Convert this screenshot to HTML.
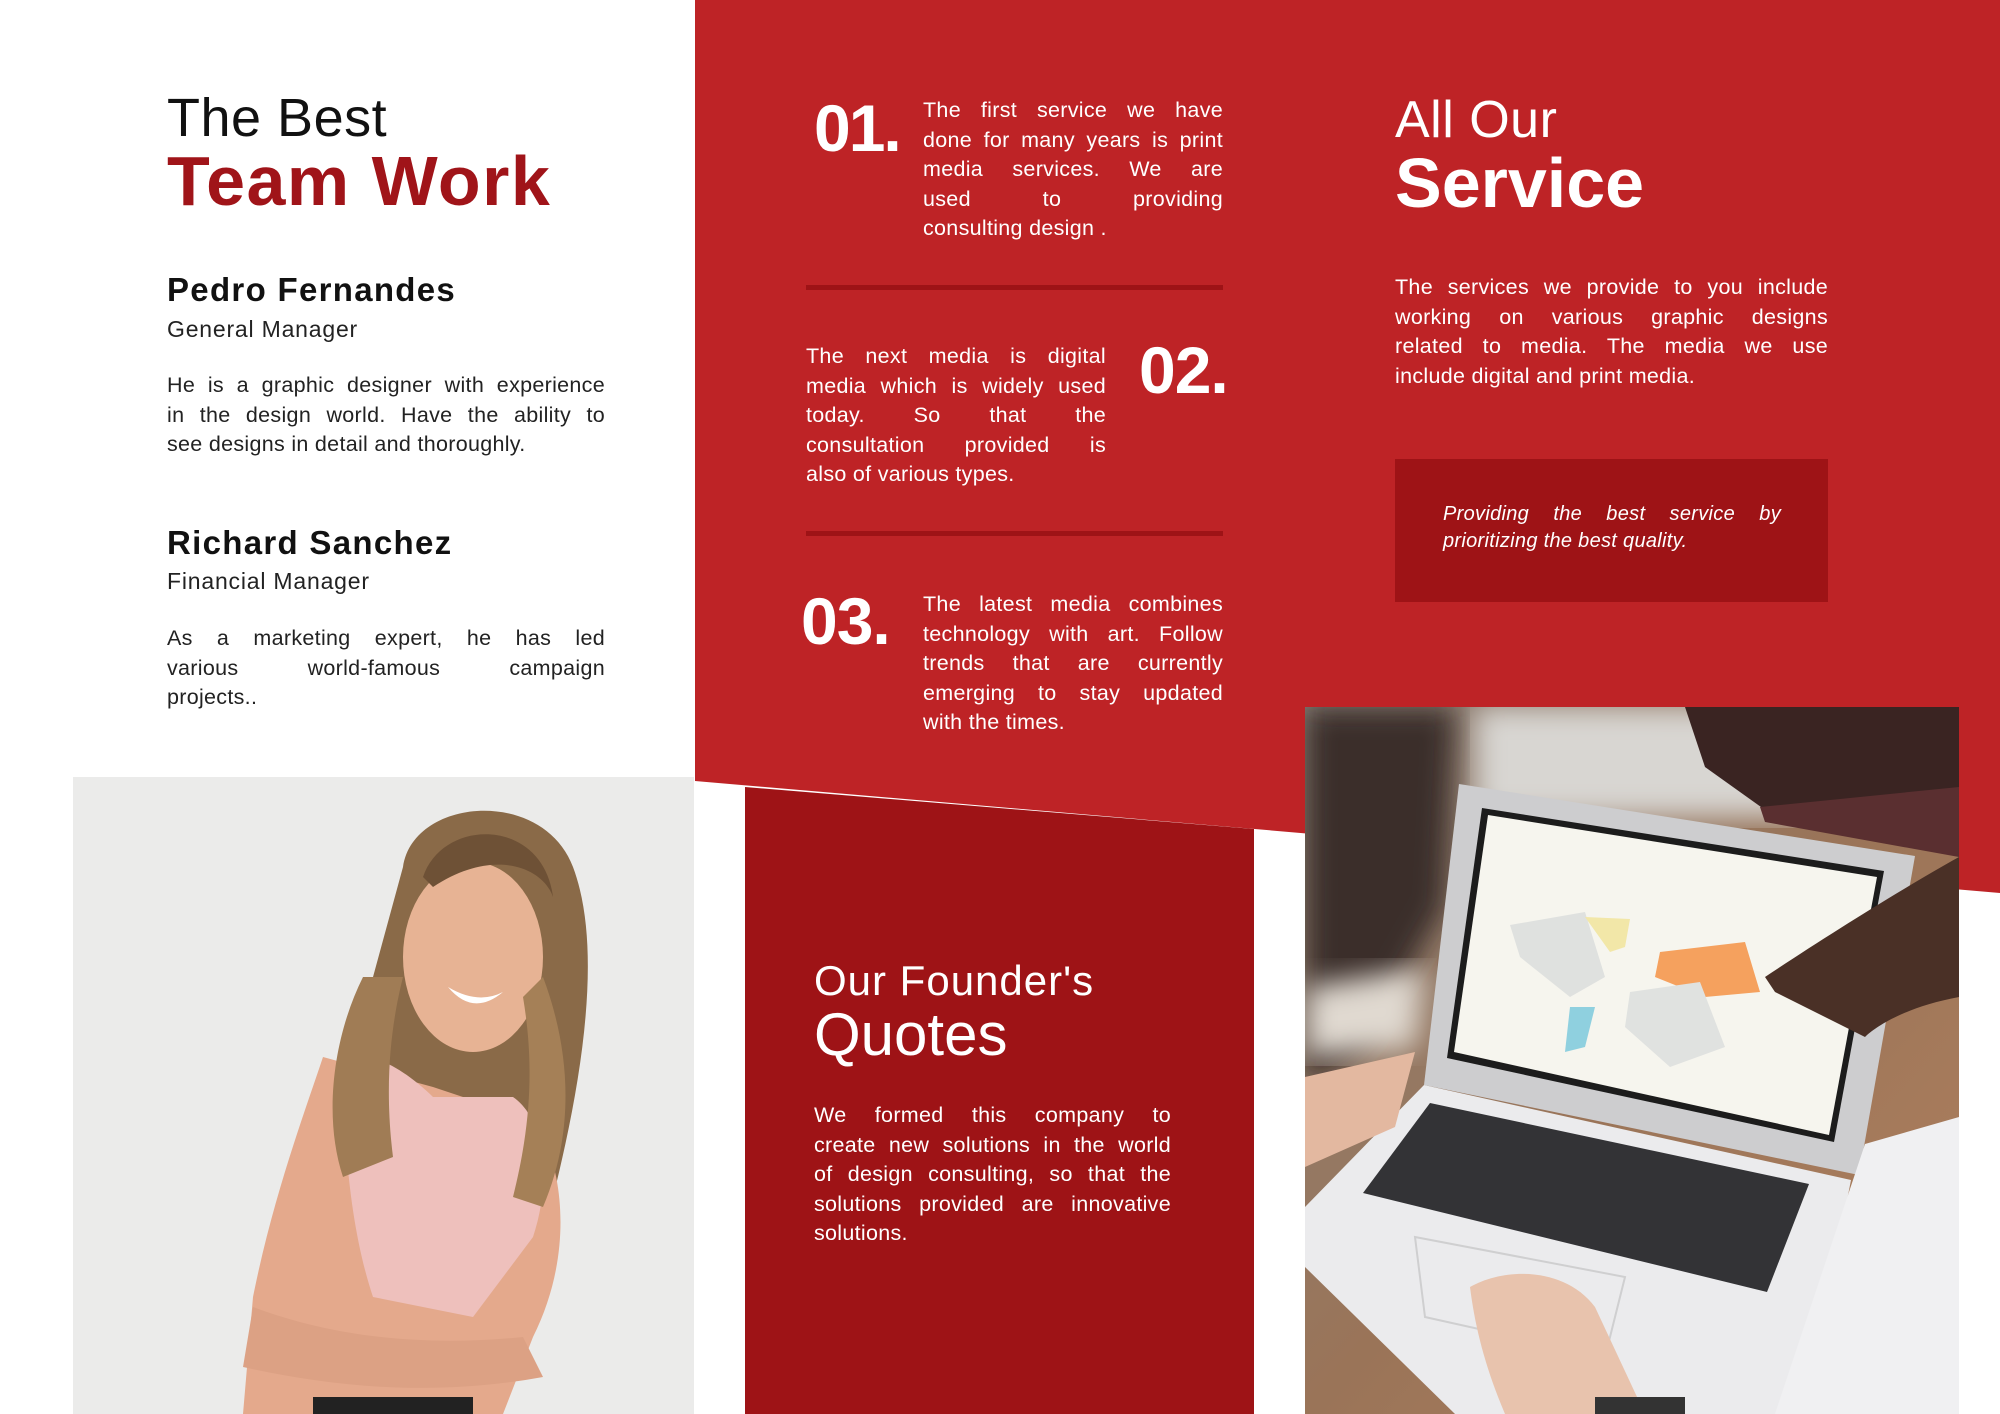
<!DOCTYPE html>
<html><head><meta charset="utf-8"><style>
*{margin:0;padding:0;box-sizing:border-box}
body{width:2000px;height:1414px;position:relative;overflow:hidden;background:#fff;font-family:"Liberation Sans",sans-serif}
.a{position:absolute;white-space:nowrap}
.p{position:absolute;font-size:21.5px;line-height:29.5px;white-space:nowrap;letter-spacing:0.3px}
.p div{text-align:justify;text-align-last:justify;height:29.5px}
.p div.e{text-align-last:left}
.w{color:#fff}
</style></head><body>
<svg class="a" style="left:0;top:0" width="2000" height="1414">
<polygon points="695,0 2000,0 2000,893 695,781" fill="#be2326"/>
<polygon points="745,787 1254,829 1254,1414 745,1414" fill="#9e1316"/>
<rect x="806" y="285" width="417" height="5" fill="#9e1316"/>
<rect x="806" y="531" width="417" height="5" fill="#9e1316"/>
<rect x="1395" y="459" width="433" height="143" fill="#9e1316"/>
</svg>

<div class="a" style="left:167px;top:91px;font-size:54px;line-height:54px;color:#111;letter-spacing:0.5px">The Best</div>
<div class="a" style="left:167px;top:146px;font-size:70px;line-height:70px;font-weight:bold;color:#a01419;letter-spacing:1.5px">Team Work</div>
<div class="a" style="left:167px;top:273px;font-size:33px;line-height:33px;font-weight:bold;color:#111;letter-spacing:1.3px">Pedro Fernandes</div>
<div class="a" style="left:167px;top:318px;font-size:23px;line-height:23px;color:#222;letter-spacing:0.8px">General Manager</div>
<div class="p" style="left:167px;top:371px;width:438px;color:#222"><div>He is a graphic designer with experience</div><div>in the design world. Have the ability to</div><div class="e">see designs in detail and thoroughly.</div></div>
<div class="a" style="left:167px;top:526px;font-size:33px;line-height:33px;font-weight:bold;color:#111;letter-spacing:1.3px">Richard Sanchez</div>
<div class="a" style="left:167px;top:570px;font-size:23px;line-height:23px;color:#222;letter-spacing:0.8px">Financial Manager</div>
<div class="p" style="left:167px;top:624px;width:438px;color:#222"><div>As a marketing expert, he has led</div><div>various world-famous campaign</div><div class="e">projects..</div></div>

<div class="a w" style="left:814px;top:95px;font-size:66px;line-height:66px;font-weight:bold;letter-spacing:-2px">01.</div>
<div class="p w" style="left:923px;top:96px;width:300px"><div>The first service we have</div><div>done for many years is print</div><div>media services. We are</div><div>used to providing</div><div class="e">consulting design .</div></div>
<div class="p w" style="left:806px;top:342px;width:300px"><div>The next media is digital</div><div>media which is widely used</div><div>today. So that the</div><div>consultation provided is</div><div class="e">also of various types.</div></div>
<div class="a w" style="left:1139px;top:337px;font-size:66px;line-height:66px;font-weight:bold;letter-spacing:-1px">02.</div>
<div class="a w" style="left:801px;top:588px;font-size:66px;line-height:66px;font-weight:bold;letter-spacing:-1px">03.</div>
<div class="p w" style="left:923px;top:590px;width:300px"><div>The latest media combines</div><div>technology with art. Follow</div><div>trends that are currently</div><div>emerging to stay updated</div><div class="e">with the times.</div></div>

<div class="a w" style="left:1395px;top:94px;font-size:52px;line-height:52px;letter-spacing:0.5px">All Our</div>
<div class="a w" style="left:1395px;top:148px;font-size:70px;line-height:70px;font-weight:bold">Service</div>
<div class="p w" style="left:1395px;top:273px;width:433px"><div>The services we provide to you include</div><div>working on various graphic designs</div><div>related to media. The media we use</div><div class="e">include digital and print media.</div></div>
<div class="p w" style="left:1443px;top:501px;width:338px;font-style:italic;font-size:20px;line-height:27px"><div style="height:27px">Providing the best service by</div><div class="e" style="height:27px">prioritizing the best quality.</div></div>

<div class="a w" style="left:814px;top:960px;font-size:42px;line-height:42px;letter-spacing:1px">Our Founder's</div>
<div class="a w" style="left:814px;top:1005px;font-size:60px;line-height:60px">Quotes</div>
<div class="p w" style="left:814px;top:1101px;width:357px;line-height:29.7px"><div>We formed this company to</div><div>create new solutions in the world</div><div>of design consulting, so that the</div><div>solutions provided are innovative</div><div class="e">solutions.</div></div>

<svg class="a" style="left:73px;top:777px" width="621" height="637" viewBox="0 0 621 637">
<rect width="621" height="637" fill="#ebebea"/>
<path d="M330,90 C340,20 470,10 500,90 C530,170 510,300 480,420 C460,480 420,500 390,480 L300,420 C260,380 270,260 300,200 Z" fill="#8a6a48"/>
<ellipse cx="400" cy="180" rx="70" ry="95" fill="#e7b394"/>
<path d="M350,100 C370,40 470,40 480,120 C470,90 420,70 360,110Z" fill="#6e5136"/>
<path d="M375,210 Q400,240 430,215 Q405,228 375,210Z" fill="#fff"/>
<path d="M250,280 C230,340 200,420 180,520 L170,637 L430,637 L460,560 C500,480 490,400 470,360 L420,330 L360,310 Z" fill="#e4a98c"/>
<path d="M270,280 C300,270 340,300 360,320 L440,320 C470,340 480,400 460,460 L400,540 L300,520 C280,460 270,380 270,280Z" fill="#eec0bc"/>
<path d="M180,530 C260,560 350,570 450,560 L470,600 C360,620 260,610 170,590Z" fill="#dca184"/>
<path d="M290,200 C260,260 250,340 270,400 L320,380 C310,300 320,240 330,200Z" fill="#a07c55"/>
<path d="M470,200 C500,280 500,360 470,430 L440,420 C460,340 460,280 450,220Z" fill="#a58057"/>
<rect x="240" y="620" width="160" height="17" fill="#222"/>
</svg>

<svg class="a" style="left:1305px;top:707px" width="654" height="707" viewBox="0 0 654 707">
<defs>
<linearGradient id="g" x1="0" y1="0" x2="1" y2="1"><stop offset="0" stop-color="#8a8078"/><stop offset=".5" stop-color="#9a7458"/><stop offset="1" stop-color="#b0805e"/></linearGradient>
<filter id="b"><feGaussianBlur stdDeviation="14"/></filter>
</defs>
<rect width="654" height="707" fill="url(#g)"/>
<rect x="170" y="0" width="420" height="110" fill="#d8d6d2" filter="url(#b)"/>
<path d="M0,0 L150,0 L140,200 L60,340 L0,380Z" fill="#3a2e2a" filter="url(#b)"/>
<path d="M380,0 L654,0 L654,140 L470,110 L400,60Z" fill="#3a2422"/>
<path d="M455,100 L654,80 L654,150 L460,115Z" fill="#5a2f30"/>
<path d="M0,280 L120,260 L110,340 L0,350Z" fill="#e0d9d0" filter="url(#b)"/>
<path d="M154,77 L610,149 L554,468 L119,378 Z" fill="#cdcdcf"/>
<path d="M177,101 L579,164 L529,435 L142,351 Z" fill="#1c1c1c"/>
<path d="M183,108 L572,170 L524,428 L149,345 Z" fill="#f6f5ee"/>
<path d="M205,218 L280,205 L300,270 L265,290 L215,250Z" fill="#dfe1df"/>
<path d="M280,210 L325,212 L320,240 L305,245Z" fill="#f2e7a8"/>
<path d="M355,245 L440,235 L455,285 L400,290 L350,270Z" fill="#f5a15e"/>
<path d="M325,285 L395,275 L420,340 L365,360 L320,320Z" fill="#e0e2e0"/>
<path d="M265,300 L290,300 L280,340 L260,345Z" fill="#8fd0df"/>
<path d="M119,378 L546,473 L500,707 L150,707 L0,560 L0,500 Z" fill="#ebebed"/>
<path d="M125,396 L504,477 L462,585 L58,486 Z" fill="#333336"/>
<path d="M110,530 L320,570 L300,650 L120,610Z" fill="none" stroke="#cfcfd0" stroke-width="2"/>
<path d="M560,437 L654,410 L654,707 L470,707Z" fill="#f0f0f2"/>
<path d="M460,270 C520,230 600,180 654,150 L654,290 C600,300 570,320 560,330 L470,285Z" fill="#4a3026"/>
<path d="M0,370 L110,345 L90,420 L0,460Z" fill="#e3b8a0"/>
<path d="M165,580 C200,560 260,560 290,600 L340,707 L200,707 C180,660 170,620 165,580Z" fill="#e8c3ad"/>
<rect x="290" y="690" width="90" height="17" fill="#333"/>
</svg>
</body></html>
